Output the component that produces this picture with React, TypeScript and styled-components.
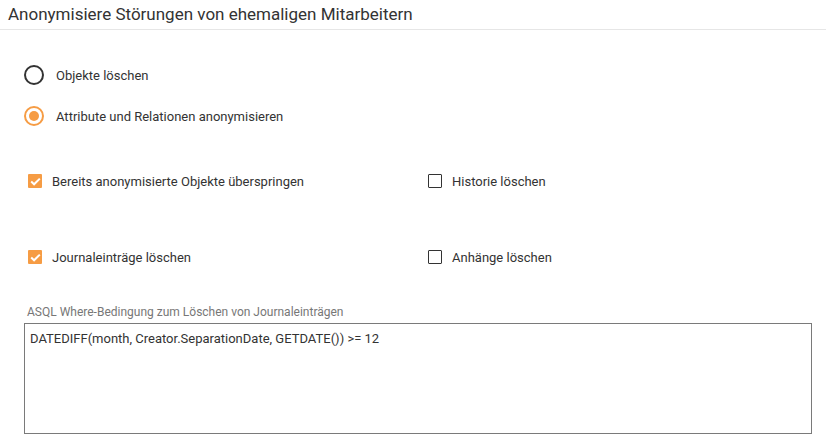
import React, { useState } from 'react';
import styled, { createGlobalStyle } from 'styled-components';

const GlobalStyle = createGlobalStyle`
  body {
    margin: 0;
    background: #fff;
    font-family: Roboto, 'Liberation Sans', sans-serif;
    color: #333;
  }
`;

const ACCENT = '#f69c44';

const Page = styled.div`
  width: 826px;
  height: 446px;
  overflow: hidden;
`;

const Header = styled.div`
  height: 29px;
  border-bottom: 1px solid #e6e6e6;
  padding-left: 8px;
  display: flex;
  align-items: center;
`;

const Title = styled.h2`
  margin: 0;
  font-size: 17px;
  font-weight: 400;
  color: #333;
  line-height: 20px;
  margin-top: -2px;
`;

const Body = styled.div`
  padding: 35px 14px 0 24px;
`;

const RadioGroup = styled.div`
  display: flex;
  flex-direction: column;
  gap: 21px;
`;

const OptionRow = styled.label<{ $gap: number }>`
  display: flex;
  align-items: center;
  gap: ${p => p.$gap}px;
  height: 20px;
  font-size: 13px;
  color: #333;
  cursor: pointer;
`;

const RadioCircle = styled.span<{ $checked: boolean }>`
  box-sizing: border-box;
  width: 20px;
  height: 20px;
  border-radius: 50%;
  border: 2px solid ${p => (p.$checked ? ACCENT : '#333')};
  display: flex;
  align-items: center;
  justify-content: center;
  &::after {
    content: '';
    width: 10px;
    height: 10px;
    border-radius: 50%;
    background: ${ACCENT};
    display: ${p => (p.$checked ? 'block' : 'none')};
  }
`;

const CheckGrid = styled.div`
  display: grid;
  grid-template-columns: 400px 1fr;
  row-gap: 56px;
  padding-left: 4px;
  margin-top: 45px;
`;

const CheckBox = styled.span<{ $checked: boolean }>`
  box-sizing: border-box;
  width: 14px;
  height: 14px;
  border-radius: 1px;
  background: ${p => (p.$checked ? ACCENT : '#fff')};
  border: ${p => (p.$checked ? 'none' : '1.5px solid #333')};
  display: flex;
  align-items: center;
  justify-content: center;
`;

const FieldLabel = styled.div`
  margin-top: 38px;
  padding-left: 3px;
  font-size: 12px;
  color: #777;
  height: 14px;
  line-height: 14px;
`;

const Area = styled.textarea`
  box-sizing: border-box;
  display: block;
  width: 788px;
  height: 111px;
  margin-top: 4px;
  border: 1px solid #7a7a7a;
  padding: 7px 5px;
  font-family: Roboto, 'Liberation Sans', sans-serif;
  font-size: 13px;
  color: #333;
  resize: none;
  outline: none;
`;

const Check = () => (
  <svg width="11" height="9" viewBox="0 0 11 9">
    <path d="M1.2 4.6 L4.1 7.3 L9.8 1.6" fill="none" stroke="#fff" strokeWidth="2" />
  </svg>
);

export default function App() {
  const [mode, setMode] = useState<'delete' | 'anon'>('anon');
  const [flags, setFlags] = useState({
    skip: true,
    history: false,
    journal: true,
    attachments: false,
  });
  const [where, setWhere] = useState('DATEDIFF(month, Creator.SeparationDate, GETDATE()) >= 12');

  const toggle = (k: keyof typeof flags) => setFlags(f => ({ ...f, [k]: !f[k] }));

  const checks: { key: keyof typeof flags; label: string }[] = [
    { key: 'skip', label: 'Bereits anonymisierte Objekte überspringen' },
    { key: 'history', label: 'Historie löschen' },
    { key: 'journal', label: 'Journaleinträge löschen' },
    { key: 'attachments', label: 'Anhänge löschen' },
  ];

  return (
    <Page>
      <GlobalStyle />
      <Header>
        <Title>Anonymisiere Störungen von ehemaligen Mitarbeitern</Title>
      </Header>
      <Body>
        <RadioGroup>
          <OptionRow $gap={12} onClick={() => setMode('delete')}>
            <RadioCircle $checked={mode === 'delete'} />
            Objekte löschen
          </OptionRow>
          <OptionRow $gap={12} onClick={() => setMode('anon')}>
            <RadioCircle $checked={mode === 'anon'} />
            Attribute und Relationen anonymisieren
          </OptionRow>
        </RadioGroup>
        <CheckGrid>
          {checks.map(c => (
            <OptionRow key={c.key} $gap={10} onClick={() => toggle(c.key)}>
              <CheckBox $checked={flags[c.key]}>{flags[c.key] && <Check />}</CheckBox>
              {c.label}
            </OptionRow>
          ))}
        </CheckGrid>
        <FieldLabel>ASQL Where-Bedingung zum Löschen von Journaleinträgen</FieldLabel>
        <Area value={where} onChange={e => setWhere(e.target.value)} />
      </Body>
    </Page>
  );
}
